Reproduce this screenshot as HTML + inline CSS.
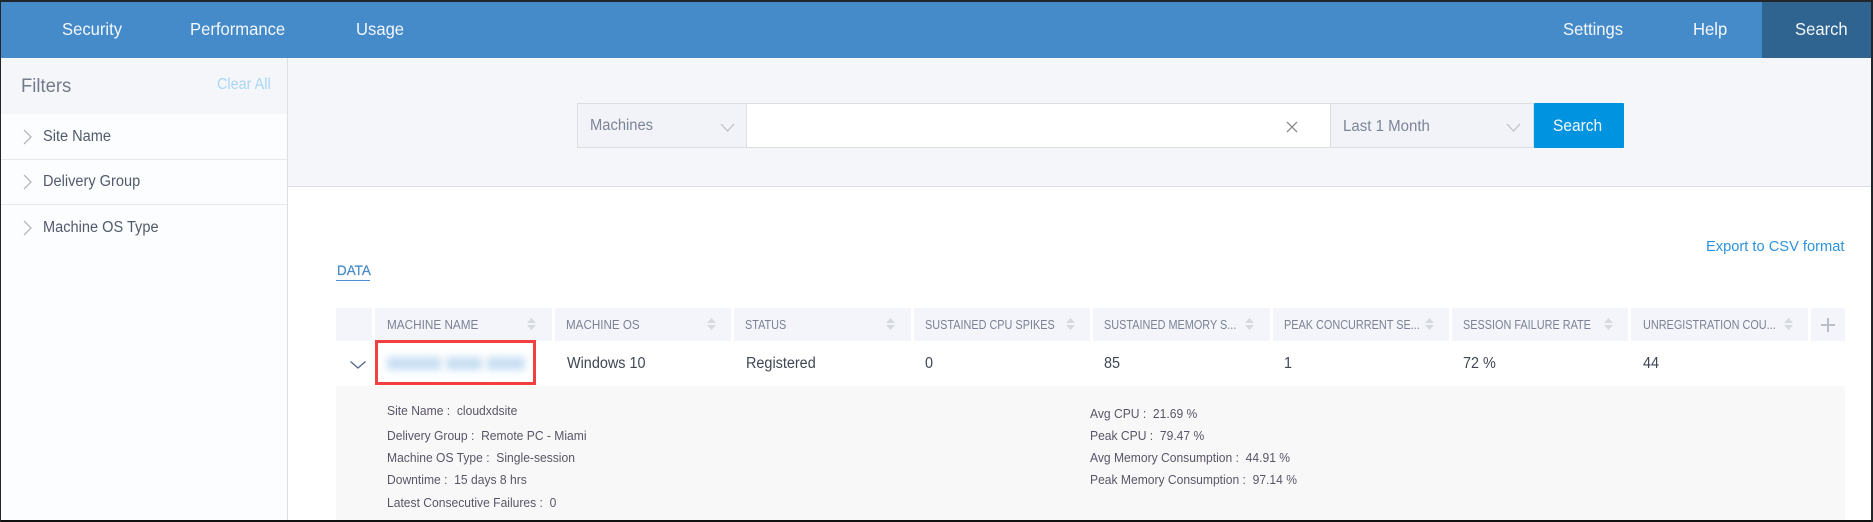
<!DOCTYPE html>
<html><head><meta charset="utf-8"><style>
html,body{margin:0;padding:0;width:1873px;height:522px;overflow:hidden;background:#fff}
body{position:relative;font-family:"Liberation Sans",sans-serif}
.a{position:absolute}
.t{position:absolute;white-space:pre;line-height:20px;height:20px;transform-origin:left center}
.n{color:#f2f7fc;font-size:17.5px;top:19px;transform:scaleX(.95)}
.f{color:#525a6b;font-size:15.5px;transform:scaleX(.94)}
.h{color:#7a8294;font-size:12.5px;top:315px;transform:scaleX(.87)}
.c{position:absolute;top:308px;height:33px;background:#f4f5fa}
.b{color:#3f4654;font-size:15.5px;top:354px;transform:scaleX(.93)}
.d{color:#5a5566;font-size:13px;transform:scaleX(.93)}
.bl{position:absolute;top:357px;height:13px;background:#c6def3;filter:blur(4px)}
</style></head><body>
<div class="a" style="left:0;top:58px;width:287px;height:462px;background:#fcfdfe"></div>
<div class="a" style="left:288px;top:58px;width:1583px;height:128px;background:#f5f6fa"></div>
<div class="a" style="left:0;top:58px;width:287px;height:56px;background:#f5f6fa"></div>
<div class="a" style="left:287px;top:58px;width:1px;height:462px;background:#dcdfe4"></div>
<div class="a" style="left:288px;top:186px;width:1583px;height:1px;background:#dcdee2"></div>
<div class="a" style="left:1px;top:159px;width:286px;height:1px;background:#e6e8ec"></div>
<div class="a" style="left:1px;top:204px;width:286px;height:1px;background:#e6e8ec"></div>

<div class="a" style="left:0;top:2px;width:1871px;height:56px;background:#468bc9"></div>
<div class="a" style="left:1762px;top:2px;width:109px;height:56px;background:#2f6390"></div>
<span class="t n" style="left:62px">Security</span>
<span class="t n" style="left:190px">Performance</span>
<span class="t n" style="left:356px">Usage</span>
<span class="t n" style="left:1563px">Settings</span>
<span class="t n" style="left:1693px">Help</span>
<span class="t n" style="left:1795px">Search</span>

<span class="t" style="left:21px;top:77px;font-size:19px;color:#737a89;transform:scaleX(.97)">Filters</span>
<span class="t" style="left:217px;top:75px;font-size:15.5px;color:#a9d6f5;transform:scaleX(.93)">Clear All</span>
<span class="t f" style="left:43px;top:127px">Site Name</span>
<span class="t f" style="left:43px;top:172px">Delivery Group</span>
<span class="t f" style="left:43px;top:218px">Machine OS Type</span>
<svg class="a" style="left:0;top:0" width="60" height="250"><g fill="none" stroke="#b4b7bc" stroke-width="1.3"><path d="M24 130l7 7-7 7"/><path d="M24 175l7 7-7 7"/><path d="M24 221l7 7-7 7"/></g></svg>

<div class="a" style="left:577px;top:103px;width:1047px;height:45px;box-sizing:border-box;border:1px solid #dcdee3;background:#fff"></div>
<div class="a" style="left:577px;top:103px;width:170px;height:45px;box-sizing:border-box;border:1px solid #dcdee3;background:#f2f3f8"></div>
<div class="a" style="left:1330px;top:103px;width:204px;height:45px;box-sizing:border-box;border:1px solid #dcdee3;background:#f2f3f8"></div>
<div class="a" style="left:1534px;top:103px;width:90px;height:45px;background:#0093e0;border-radius:1px"></div>
<span class="t" style="left:590px;top:116px;font-size:15.5px;color:#7c8496;transform:scaleX(.95)">Machines</span>
<span class="t" style="left:1343px;top:117px;font-size:15.5px;color:#7c8496;transform:scaleX(.97)">Last 1 Month</span>
<span class="t" style="left:1553px;top:116px;font-size:16.5px;color:#f2f9fe;transform:scaleX(.94)">Search</span>
<svg class="a" style="left:0;top:0" width="1640" height="160"><g fill="none" stroke="#c0c4cc" stroke-width="1.3"><path d="M721 124l6.500 7 6.500-7"/><path d="M1507 124l6.500 7 6.500-7"/></g><path d="M1287 122l10 10M1297 122l-10 10" fill="none" stroke="#8a8a8a" stroke-width="1.300"/></svg>

<span class="t" style="left:1706px;top:237px;font-size:15px;color:#2b93dd;transform:scaleX(.977)">Export to CSV format</span>
<span class="t" style="left:337px;top:260px;font-size:14px;color:#4a8bc9;-webkit-text-stroke:.3px #4a8bc9;transform:scaleX(.96)">DATA</span>
<div class="a" style="left:336px;top:280px;width:34px;height:1px;background:#4a90d2"></div>

<div class="c" style="left:336px;width:36px"></div>
<div class="c" style="left:375px;width:177px"></div>
<div class="c" style="left:555px;width:176px"></div>
<div class="c" style="left:734px;width:177px"></div>
<div class="c" style="left:914px;width:176px"></div>
<div class="c" style="left:1093px;width:177px"></div>
<div class="c" style="left:1273px;width:176px"></div>
<div class="c" style="left:1452px;width:176px"></div>
<div class="c" style="left:1631px;width:177px"></div>
<div class="c" style="left:1811px;width:34px"></div>
<span class="t h" style="left:387px;transform:scaleX(.94)">MACHINE NAME</span>
<span class="t h" style="left:566px;transform:scaleX(.93)">MACHINE OS</span>
<span class="t h" style="left:745px">STATUS</span>
<span class="t h" style="left:925px">SUSTAINED CPU SPIKES</span>
<span class="t h" style="left:1104px">SUSTAINED MEMORY S...</span>
<span class="t h" style="left:1284px">PEAK CONCURRENT SE...</span>
<span class="t h" style="left:1463px">SESSION FAILURE RATE</span>
<span class="t h" style="left:1643px">UNREGISTRATION COU...</span>
<svg class="a" style="left:0;top:0" width="1873" height="345"><g fill="#d6d9df">
<path d="M527 323l4.500-5 4.500 5zM527 325h9l-4.500 5z"/>
<path d="M707 323l4.500-5 4.500 5zM707 325h9l-4.500 5z"/>
<path d="M886 323l4.500-5 4.500 5zM886 325h9l-4.500 5z"/>
<path d="M1066 323l4.500-5 4.500 5zM1066 325h9l-4.500 5z"/>
<path d="M1245 323l4.500-5 4.500 5zM1245 325h9l-4.500 5z"/>
<path d="M1425 323l4.500-5 4.500 5zM1425 325h9l-4.500 5z"/>
<path d="M1604 323l4.500-5 4.500 5zM1604 325h9l-4.500 5z"/>
<path d="M1784 323l4.500-5 4.500 5zM1784 325h9l-4.500 5z"/></g>
<path d="M1828 318v14M1821 325h14" stroke="#b9bdc9" stroke-width="2" fill="none"/></svg>

<div class="a" style="left:336px;top:386px;width:1509px;height:134px;background:#f8f8f9"></div>
<svg class="a" style="left:345px;top:354px" width="25" height="20"><path d="M5.500 7.500l7.500 6.500 7.500-6.500" fill="none" stroke="#4f6b88" stroke-width="1.300"/></svg>
<div class="bl" style="left:387px;width:54px"></div>
<div class="bl" style="left:446px;width:36px"></div>
<div class="bl" style="left:487px;width:38px"></div>
<div class="a" style="left:375px;top:340px;width:161px;height:45px;box-sizing:border-box;border:3px solid #f24040"></div>
<span class="t b" style="left:567px">Windows 10</span>
<span class="t b" style="left:746px">Registered</span>
<span class="t b" style="left:925px">0</span>
<span class="t b" style="left:1104px">85</span>
<span class="t b" style="left:1284px">1</span>
<span class="t b" style="left:1463px">72 %</span>
<span class="t b" style="left:1643px">44</span>

<span class="t d" style="left:387px;top:401px">Site Name :  cloudxdsite</span>
<span class="t d" style="left:387px;top:426px">Delivery Group :  Remote PC - Miami</span>
<span class="t d" style="left:387px;top:448px">Machine OS Type :  Single-session</span>
<span class="t d" style="left:387px;top:470px">Downtime :  15 days 8 hrs</span>
<span class="t d" style="left:387px;top:493px">Latest Consecutive Failures :  0</span>
<span class="t d" style="left:1090px;top:404px">Avg CPU :  21.69 %</span>
<span class="t d" style="left:1090px;top:426px">Peak CPU :  79.47 %</span>
<span class="t d" style="left:1090px;top:448px">Avg Memory Consumption :  44.91 %</span>
<span class="t d" style="left:1090px;top:470px">Peak Memory Consumption :  97.14 %</span>

<div class="a" style="left:0;top:0;width:1873px;height:2px;background:#22262b"></div>
<div class="a" style="left:0;top:520px;width:1873px;height:2px;background:#111"></div>
<div class="a" style="left:0;top:0;width:1px;height:522px;background:#22262b"></div>
<div class="a" style="left:1871px;top:0;width:2px;height:522px;background:#22262b"></div>
</body></html>
